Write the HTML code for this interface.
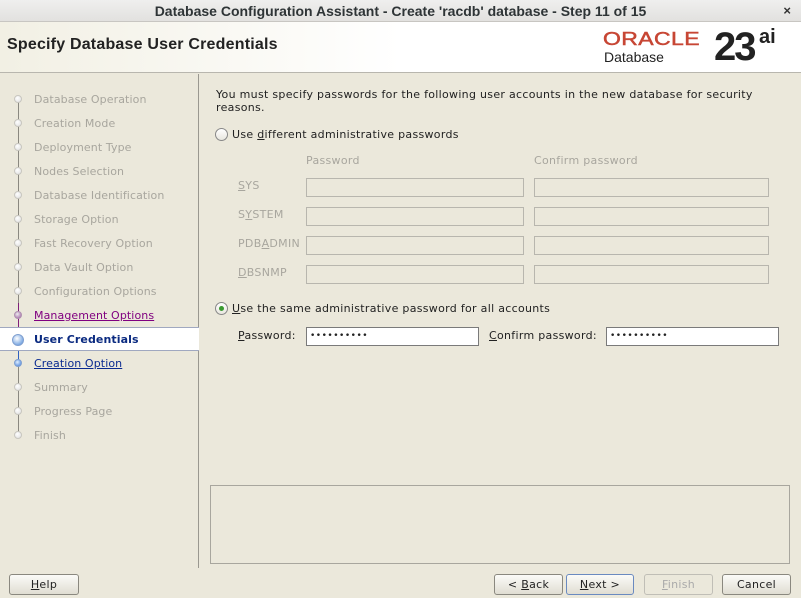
<!DOCTYPE html>
<html><head><style>
*{margin:0;padding:0;box-sizing:border-box}
body{width:801px;height:598px;background:#ebe8db;font-family:"DejaVu Sans","Liberation Sans",sans-serif;font-size:11px;color:#222;position:relative;overflow:hidden}
.a{position:absolute;white-space:nowrap}
.m{letter-spacing:0.3px}
.tb{left:0;top:0;width:801px;height:22px;background:linear-gradient(#efefee,#e2e1df);border-bottom:1px solid #c8c6c2;text-align:center;font:bold 14px "Liberation Sans",sans-serif;line-height:22px;color:#2e3436}
.hd{left:0;top:22px;width:801px;height:51px;background:linear-gradient(90deg,#f2f0e4,#ffffff 50%);border-bottom:1px solid #b8b6ae}
.side{left:0;top:74px;width:199px;height:494px;border-right:1px solid #9a9890}
.it{left:34px;color:#a8a69e;letter-spacing:0.1px}
.dot{width:8px;height:8px;border-radius:50%;background:radial-gradient(circle at 40% 35%,#fff,#ddd);border:1px solid #c8c6bf}
.fld{height:19px;border:1px solid #b8b6ae;background:#ebe8db}
.in{height:19px;border:1px solid #7a7a7a;background:#fff;font-size:9px;padding-left:3px;line-height:17px;letter-spacing:0.5px}
.btn{top:574px;height:21px;border:1px solid #8a887f;border-radius:3px;background:linear-gradient(#fbfbf8,#e0ddd2);text-align:center;line-height:19px;letter-spacing:0.3px}
.lb{color:#a8a69e}
</style></head><body>
<div class="a tb">Database Configuration Assistant - Create 'racdb' database - Step 11 of 15</div>
<div class="a" style="right:10px;top:3px;font:bold 13px 'Liberation Sans';color:#333">×</div>
<div class="a hd"></div>
<div class="a" style="left:7px;top:36px;font:bold 16px 'Liberation Sans',sans-serif;color:#222;letter-spacing:0.2px">Specify Database User Credentials</div>
<div class="a" style="left:603px;top:28px;font:23px 'Liberation Sans',sans-serif;color:#c74634;letter-spacing:0.4px;transform:scaleY(0.82);transform-origin:left top;-webkit-text-stroke:0.6px #c74634">ORACLE</div>
<div class="a" style="left:604px;top:49px;font:14px 'Liberation Sans',sans-serif;color:#222">Database</div>
<div class="a" style="left:714px;top:25px;font:bold 40px 'Liberation Sans',sans-serif;color:#222;letter-spacing:-2px">23</div>
<div class="a" style="left:759px;top:26px;font:bold 20px 'Liberation Sans',sans-serif;color:#222">ai</div>

<div class="a side"></div>
<div class="a" style="left:18px;top:99px;width:1px;height:337px;background:#8a8880"></div>
<div class="a" style="left:18px;top:303px;width:1px;height:24px;background:#80207a"></div>
<div class="a" style="left:18px;top:350px;width:1px;height:14px;background:#3060c0"></div>
<div class="a" style="left:0;top:327px;width:199px;height:24px;background:#fff;border-top:1px solid #a0a8c0;border-bottom:1px solid #a0a8c0"></div>
<div class="a it" style="top:93px">Database Operation</div>
<div class="a it" style="top:117px">Creation Mode</div>
<div class="a it" style="top:141px">Deployment Type</div>
<div class="a it" style="top:165px">Nodes Selection</div>
<div class="a it" style="top:189px">Database Identification</div>
<div class="a it" style="top:213px">Storage Option</div>
<div class="a it" style="top:237px">Fast Recovery Option</div>
<div class="a it" style="top:261px">Data Vault Option</div>
<div class="a it" style="top:285px">Configuration Options</div>
<div class="a it" style="top:309px;color:#800080;text-decoration:underline">Management Options</div>
<div class="a it" style="top:333px;color:#0a2a80;font-weight:bold">User Credentials</div>
<div class="a it" style="top:357px;color:#0a2a90;text-decoration:underline">Creation Option</div>
<div class="a it" style="top:381px">Summary</div>
<div class="a it" style="top:405px">Progress Page</div>
<div class="a it" style="top:429px">Finish</div>
<div class="a dot" style="left:14px;top:95px"></div><div class="a dot" style="left:14px;top:119px"></div><div class="a dot" style="left:14px;top:143px"></div><div class="a dot" style="left:14px;top:167px"></div><div class="a dot" style="left:14px;top:191px"></div><div class="a dot" style="left:14px;top:215px"></div><div class="a dot" style="left:14px;top:239px"></div><div class="a dot" style="left:14px;top:263px"></div><div class="a dot" style="left:14px;top:287px"></div>
<div class="a dot" style="left:14px;top:311px;background:radial-gradient(circle at 40% 35%,#eee,#9a5aa0);border-color:#b090b0"></div>
<div class="a dot" style="left:12px;top:334px;width:12px;height:12px;background:radial-gradient(circle at 40% 35%,#fff,#4a88d8);border-color:#80a0d0"></div>
<div class="a dot" style="left:14px;top:359px;background:radial-gradient(circle at 40% 35%,#dfefff,#3a78d8);border-color:#80a0d0"></div>
<div class="a dot" style="left:14px;top:383px"></div><div class="a dot" style="left:14px;top:407px"></div><div class="a dot" style="left:14px;top:431px"></div>

<div class="a m" style="left:216px;top:88px;line-height:13px">You must specify passwords for the following user accounts in the new database for security<br>reasons.</div>
<div class="a" style="left:215px;top:128px;width:13px;height:13px;border-radius:50%;border:1px solid #888;background:linear-gradient(#fff,#e8e6de)"></div>
<div class="a m" style="left:232px;top:128px">Use <u>d</u>ifferent administrative passwords</div>
<div class="a lb m" style="left:306px;top:154px">Password</div>
<div class="a lb m" style="left:534px;top:154px">Confirm password</div>
<div class="a lb m" style="left:238px;top:179px"><u>S</u>YS</div>
<div class="a lb m" style="left:238px;top:208px">S<u>Y</u>STEM</div>
<div class="a lb m" style="left:238px;top:237px">PDB<u>A</u>DMIN</div>
<div class="a lb m" style="left:238px;top:266px"><u>D</u>BSNMP</div>
<div class="a fld" style="left:306px;top:178px;width:218px"></div><div class="a fld" style="left:534px;top:178px;width:235px"></div>
<div class="a fld" style="left:306px;top:207px;width:218px"></div><div class="a fld" style="left:534px;top:207px;width:235px"></div>
<div class="a fld" style="left:306px;top:236px;width:218px"></div><div class="a fld" style="left:534px;top:236px;width:235px"></div>
<div class="a fld" style="left:306px;top:265px;width:218px"></div><div class="a fld" style="left:534px;top:265px;width:235px"></div>
<div class="a" style="left:215px;top:302px;width:13px;height:13px;border-radius:50%;border:1px solid #888;background:linear-gradient(#fff,#e8e6de)"></div>
<div class="a" style="left:219px;top:306px;width:5px;height:5px;border-radius:50%;background:#3a9a30"></div>
<div class="a m" style="left:232px;top:302px"><u>U</u>se the same administrative password for all accounts</div>
<div class="a m" style="left:238px;top:329px"><u>P</u>assword:</div>
<div class="a in" style="left:306px;top:327px;width:173px">••••••••••</div>
<div class="a m" style="left:489px;top:329px"><u>C</u>onfirm password:</div>
<div class="a in" style="left:606px;top:327px;width:173px">••••••••••</div>
<div class="a" style="left:210px;top:485px;width:580px;height:79px;border:1px solid #a8a69e"></div>

<div class="a btn" style="left:9px;width:70px"><u>H</u>elp</div>
<div class="a btn" style="left:494px;width:69px">&lt; <u>B</u>ack</div>
<div class="a btn" style="left:566px;width:68px;border-color:#6a8ac0"><u>N</u>ext &gt;</div>
<div class="a btn" style="left:644px;width:69px;color:#aaa;border-color:#c0beb6;background:#ebe8db"><u>F</u>inish</div>
<div class="a btn" style="left:722px;width:69px">Cancel</div>
</body></html>
